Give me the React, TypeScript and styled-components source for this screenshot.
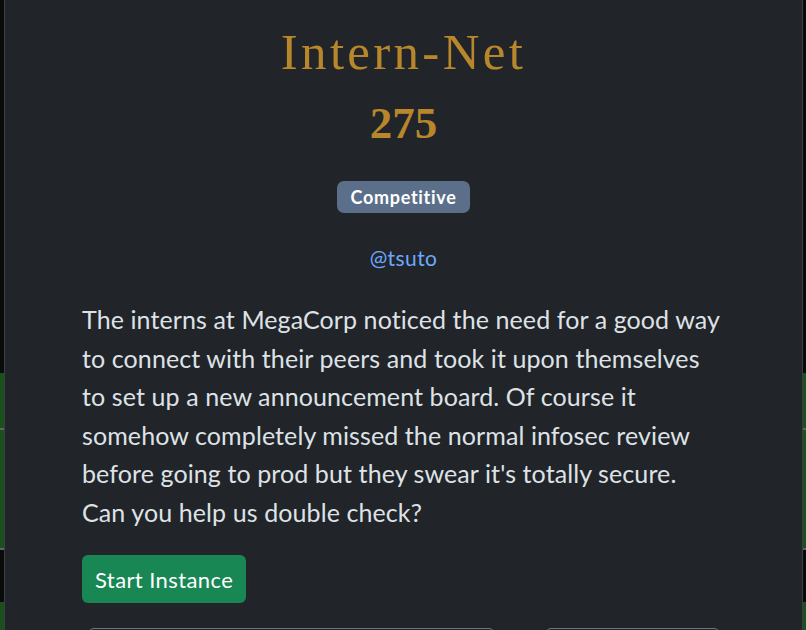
import React from 'react'
import styled, { createGlobalStyle } from 'styled-components'

const GlobalStyle = createGlobalStyle`
  html, body {
    margin: 0;
    padding: 0;
    height: 100%;
    overflow: hidden;
    background: #0c0c0d;
  }
  body {
    font-family: Lato, "Noto Sans", sans-serif;
  }
`

const Page = styled.div`
  height: 630px;
  display: flex;
  flex-direction: column;
  overflow: hidden;
`

const Spacer = styled.div<{ h: number }>`
  flex-shrink: 0;
  height: ${({ h }) => h}px;
`

const ListRow = styled.div<{ h: number }>`
  flex-shrink: 0;
  height: ${({ h }) => h}px;
  background: #1c5a1f;
  border-bottom: 2px solid #6d6f6d;
`

const Backdrop = styled.div`
  position: fixed;
  inset: 0;
  background: rgba(0, 0, 0, 0.1);
`

const Modal = styled.div`
  position: absolute;
  left: 4px;
  right: 3px;
  top: 0;
  bottom: 0;
  overflow: hidden;
  background: #212529;
  border-left: 1px solid #3a3f44;
  border-right: 1px solid #3a3f44;
  padding: 0 77px;
  display: flex;
  flex-direction: column;
  align-items: center;
`

const Title = styled.h1`
  flex-shrink: 0;
  margin: 22px 0 0;
  font-family: "Liberation Serif", "DejaVu Serif", serif;
  font-weight: 400;
  font-size: 51px;
  line-height: 60px;
  letter-spacing: 3.3px;
  color: #b8862b;
`

const Points = styled.div`
  flex-shrink: 0;
  margin-top: 14px;
  font-family: "Liberation Serif", "DejaVu Serif", serif;
  font-weight: 700;
  font-size: 45px;
  line-height: 54px;
  color: #b8862b;
`

const Badge = styled.span`
  flex-shrink: 0;
  margin-top: 31px;
  display: inline-flex;
  align-items: center;
  height: 32px;
  padding: 0 14px;
  border-radius: 7px;
  background: #5b6e8a;
  color: #fff;
  font-weight: 700;
  font-size: 18px;
  letter-spacing: 0.7px;
`

const Author = styled.a`
  flex-shrink: 0;
  margin-top: 32px;
  color: #6ea8fe;
  font-size: 21px;
  line-height: 26px;
  letter-spacing: 0.4px;
  text-decoration: none;
`

const Description = styled.p`
  flex-shrink: 0;
  align-self: stretch;
  max-width: 646px;
  margin: 29px 0 0;
  color: #dee2e6;
  font-size: 25px;
  line-height: 38.5px;
  letter-spacing: 0.1px;
`

const StartButton = styled.button`
  flex-shrink: 0;
  align-self: flex-start;
  margin-top: 24px;
  height: 48px;
  padding: 0 13px;
  border: none;
  border-radius: 6px;
  background: #198754;
  color: #fff;
  font-family: Lato, "Noto Sans", sans-serif;
  font-size: 22px;
  letter-spacing: 0.4px;
`

const FlagRow = styled.div`
  flex-shrink: 0;
  align-self: stretch;
  margin-top: 25px;
  display: flex;
  gap: 50px;
  padding-left: 6px;
`

const FlagInput = styled.input`
  width: 407px;
  height: 44px;
  box-sizing: border-box;
  border: 1px solid #6c757d;
  border-radius: 6px;
  background: #212529;
`

const SubmitButton = styled.button`
  width: 175px;
  height: 44px;
  border: 1px solid #6c757d;
  border-radius: 6px;
  background: #212529;
`

export default function App() {
  return (
    <>
      <GlobalStyle />
      <Page>
        <Spacer h={373} />
        <ListRow h={55} />
        <ListRow h={118} />
        <Spacer h={52} />
        <ListRow h={60} />
      </Page>
      <Backdrop>
        <Modal>
          <Title>Intern-Net</Title>
          <Points>275</Points>
          <Badge>Competitive</Badge>
          <Author href="#">@tsuto</Author>
          <Description>
            The interns at MegaCorp noticed the need for a good way to connect
            with their peers and took it upon themselves to set up a new
            announcement board. Of course it somehow completely missed the
            normal infosec review before going to prod but they swear it's
            totally secure. Can you help us double check?
          </Description>
          <StartButton>Start Instance</StartButton>
          <FlagRow>
            <FlagInput />
            <SubmitButton />
          </FlagRow>
        </Modal>
      </Backdrop>
    </>
  )
}
